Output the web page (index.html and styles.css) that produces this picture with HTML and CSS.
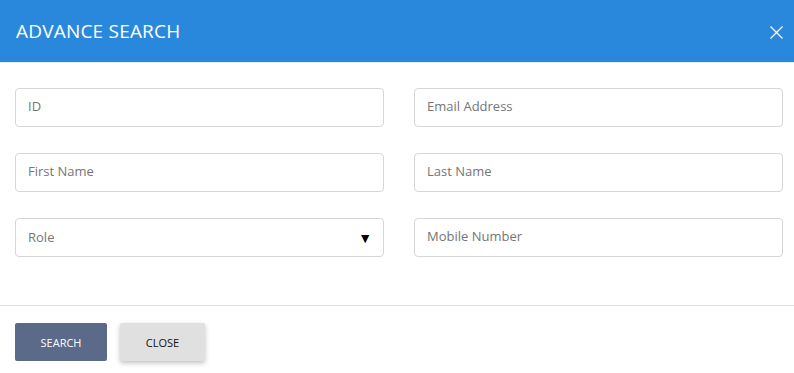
FILE: index.html
```html
<!DOCTYPE html>
<html lang="en">
<head>
  <meta charset="UTF-8" />
  <title>Advance Search</title>
  <link rel="stylesheet" href="styles.css">
</head>
<body>

  <div class="modal">
    <div class="modal-header">
      <h2>ADVANCE SEARCH</h2>
      <button class="close-x" aria-label="Close">
        <svg width="13" height="13" viewBox="0 0 13 13"><path d="M0.5 0.5L12.5 12.5M12.5 0.5L0.5 12.5" stroke="#fff" stroke-width="1.3" fill="none"/></svg>
      </button>
    </div>

    <div class="modal-body">
      <input type="text" placeholder="ID" />
      <input type="text" placeholder="Email Address" />
      <input type="text" placeholder="First Name" />
      <input type="text" placeholder="Last Name" />
      <div class="select">
        <span>Role</span>
        <span class="caret">&#9660;</span>
      </div>
      <input type="text" placeholder="Mobile Number" />
    </div>

    <div class="modal-footer">
      <button class="btn btn-search">SEARCH</button>
      <button class="btn btn-close">CLOSE</button>
    </div>
  </div>

</body>
</html>
```

FILE: styles.css
```css
body {
  margin: 0;
  font-family: "Open Sans", "Noto Sans", Arial, sans-serif;
  background-color: white;
}
.modal-header {
  height: 62px;
  background-color: #2a88dc;
  display: flex;
  align-items: center;
  justify-content: space-between;
  padding: 0 11px 0 16px;
  border-bottom: 1px solid #e6eef6;
}
.modal-header h2 {
  margin: 0;
  color: white;
  font-weight: 400;
  font-size: 19px;
  letter-spacing: 0.2px;
}
.close-x {
  background: none;
  border: none;
  padding: 0;
  margin-top: 2px;
  cursor: pointer;
  display: flex;
}
.modal-body {
  display: grid;
  grid-template-columns: 369px 369px;
  column-gap: 30px;
  row-gap: 26px;
  padding: 25px 11px 48px 15px;
  border-bottom: 1px solid #dee2e6;
}
input, .select {
  box-sizing: border-box;
  height: 39px;
  width: 100%;
  margin: 0;
  padding: 0 12px 3px;
  border: 1px solid #d6d6d6;
  border-radius: 4px;
  font-family: inherit;
  font-size: 13px;
  color: #333;
  background: white;
}
input::placeholder {
  color: #757575;
}
.select {
  display: flex;
  align-items: center;
  justify-content: space-between;
  color: #757575;
  padding-bottom: 1px;
}
.select .caret {
  color: #000;
  font-size: 14px;
  margin-right: -1px;
}
.modal-footer {
  display: flex;
  gap: 13px;
  padding: 17px 15px;
}
.btn {
  height: 38px;
  border: none;
  border-radius: 2px;
  font-family: inherit;
  font-size: 11px;
  cursor: pointer;
}
.btn-search {
  width: 92px;
  background-color: #5a6a88;
  color: white;
}
.btn-close {
  width: 85px;
  background-color: #e0e0e0;
  color: #111;
  box-shadow: 0 2px 5px rgba(0, 0, 0, 0.25);
}
```
